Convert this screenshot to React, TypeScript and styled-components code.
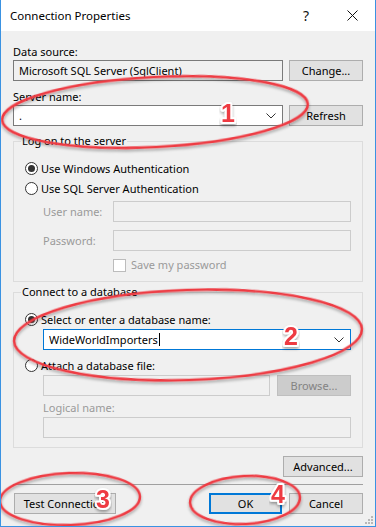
import React from "react";
import styled, { createGlobalStyle, css } from "styled-components";

const GlobalStyle = createGlobalStyle`
  html, body {
    margin: 0;
    padding: 0;
    background: #ffffff;
  }
  body {
    font-family: "Noto Sans", "Open Sans", sans-serif;
    font-size: 11px;
    color: #000;
  }
`;

const Window = styled.div`
  position: relative;
  width: 376px;
  height: 527px;
  box-sizing: border-box;
  border: 1px solid #3a92e2;
  border-top: none;
  background: #f0f0f0;
  display: flex;
  flex-direction: column;
  overflow: hidden;
`;

const TitleBar = styled.div`
  height: 31px;
  flex: none;
  background: #ffffff;
  display: flex;
  align-items: center;
  padding-left: 9px;
  font-size: 11.5px;
`;

const TitleText = styled.div`
  flex: 1;
`;

const TitleIcon = styled.div`
  width: 46px;
  height: 31px;
  display: flex;
  align-items: center;
  justify-content: center;
  font-size: 14px;
  color: #111;
`;

const Body = styled.div`
  flex: 1;
  display: flex;
  flex-direction: column;
  padding: 13px 12px 0 12px;
`;

const Label = styled.div<{ $disabled?: boolean; $indent?: number }>`
  height: 16px;
  line-height: 16px;
  white-space: nowrap;
  color: ${(p) => (p.$disabled ? "#9a9a9a" : "#000")};
  margin-left: ${(p) => p.$indent ?? 0}px;
`;

type BoxKind = "readonly" | "normal" | "disabled" | "focus";

const Box = styled.div<{ $kind: BoxKind; $w?: number }>`
  box-sizing: border-box;
  height: 21px;
  ${(p) => (p.$w ? css`width: ${p.$w}px; flex: none;` : css`flex: 1;`)}
  display: flex;
  align-items: center;
  padding: 0 4px 0 5px;
  border: 1px solid #7a7a7a;
  background: #ffffff;
  white-space: nowrap;
  ${(p) =>
    p.$kind === "readonly" &&
    css`
      background: #f0f0f0;
    `}
  ${(p) =>
    p.$kind === "disabled" &&
    css`
      background: #f0f0f0;
      border-color: #cccccc;
    `}
  ${(p) =>
    p.$kind === "focus" &&
    css`
      border-color: #0078d7;
    `}
`;

const BoxText = styled.span`
  flex: 1;
  overflow: hidden;
`;

const Caret = styled.span`
  display: inline-block;
  width: 1px;
  height: 13px;
  background: #000;
  vertical-align: -2px;
  margin-left: 1px;
`;

const Chevron = () => (
  <svg width="10" height="6" viewBox="0 0 10 6" style={{ flex: "none", marginRight: 2 }}>
    <path d="M0.5 0.5 L5 5 L9.5 0.5" fill="none" stroke="#333" strokeWidth="1" />
  </svg>
);

const Button = styled.button<{ $w: number; $default?: boolean }>`
  box-sizing: border-box;
  width: ${(p) => p.$w}px;
  height: 21px;
  flex: none;
  padding: 0;
  font: inherit;
  color: #000;
  background: #e1e1e1;
  border: 1px solid #adadad;
  white-space: nowrap;
  ${(p) =>
    p.$default &&
    css`
      border: 2px solid #0078d7;
    `}
  &:disabled {
    background: #cccccc;
    border-color: #bfbfbf;
    color: #838383;
  }
`;

const Row = styled.div<{ $gap?: number; $top?: number; $indent?: number }>`
  display: flex;
  align-items: center;
  gap: ${(p) => p.$gap ?? 6}px;
  margin-top: ${(p) => p.$top ?? 0}px;
  margin-left: ${(p) => p.$indent ?? 0}px;
`;

const Group = styled.fieldset<{ $top: number; $bottom: number }>`
  margin: ${(p) => p.$top}px 0 0 0;
  padding: 11px 11px ${(p) => p.$bottom}px 11px;
  border: 1px solid #dcdcdc;
  min-width: 0;
  display: flex;
  flex-direction: column;
`;

const Legend = styled.legend`
  padding: 0 1px;
  margin-left: -4px;
  height: 16px;
  line-height: 16px;
`;

const RadioRow = styled.label<{ $top?: number }>`
  display: flex;
  align-items: center;
  gap: 3px;
  height: 16px;
  margin-top: ${(p) => p.$top ?? 0}px;
  white-space: nowrap;
`;

const RadioCircle = styled.span<{ $checked?: boolean }>`
  box-sizing: border-box;
  width: 13px;
  height: 13px;
  border-radius: 50%;
  border: 1px solid #333;
  background: #fff;
  display: flex;
  align-items: center;
  justify-content: center;
  &::after {
    content: "";
    width: 7px;
    height: 7px;
    border-radius: 50%;
    background: ${(p) => (p.$checked ? "#333" : "transparent")};
  }
`;

const CheckBox = styled.span`
  box-sizing: border-box;
  width: 13px;
  height: 13px;
  border: 1px solid #bcbcbc;
  background: #fff;
  flex: none;
`;

const FieldLabel = styled(Label)`
  width: 70px;
  flex: none;
`;

const Separator = styled.div`
  height: 1px;
  background: #a0a0a0;
  margin-top: 7px;
`;

const Footer = styled.div`
  display: flex;
  align-items: center;
  margin-top: 8px;
  padding-left: 1px;
`;

const Spacer = styled.div`
  flex: 1;
`;

const Grip = styled.svg`
  position: absolute;
  right: 2px;
  bottom: 2px;
`;

const Overlay = styled.svg`
  position: absolute;
  left: -1px;
  top: 0;
  pointer-events: none;
`;

const marks = [
  { cx: 155, cy: 112, rx: 153, ry: 35, rot: -3, n: "1", x: 221, y: 122 },
  { cx: 188, cy: 335, rx: 174, ry: 45, rot: -2, n: "2", x: 284, y: 345 },
  { cx: 70, cy: 499, rx: 70, ry: 26, rot: -2, n: "3", x: 96, y: 508 },
  { cx: 245, cy: 500, rx: 55, ry: 24, rot: -3, n: "4", x: 271, y: 503 },
];

export default function App() {
  return (
    <>
      <GlobalStyle />
      <Window>
        <TitleBar>
          <TitleText>Connection Properties</TitleText>
          <TitleIcon>?</TitleIcon>
          <TitleIcon>
            <svg width="11" height="11" viewBox="0 0 11 11">
              <path d="M0.5 0.5 L10.5 10.5 M10.5 0.5 L0.5 10.5" stroke="#111" strokeWidth="1" />
            </svg>
          </TitleIcon>
        </TitleBar>
        <Body>
          <Label>Data source:</Label>
          <Row>
            <Box $kind="readonly">
              <BoxText>Microsoft SQL Server (SqlClient)</BoxText>
            </Box>
            <Button $w={74}>Change...</Button>
          </Row>
          <Label style={{ marginTop: 8 }}>Server name:</Label>
          <Row>
            <Box $kind="normal">
              <BoxText>.</BoxText>
              <Chevron />
            </Box>
            <Button $w={74}>Refresh</Button>
          </Row>

          <Group $top={7} $bottom={8}>
            <Legend>Log on to the server</Legend>
            <RadioRow>
              <RadioCircle $checked />
              Use Windows Authentication
            </RadioRow>
            <RadioRow $top={4}>
              <RadioCircle />
              Use SQL Server Authentication
            </RadioRow>
            <Row $top={5} $indent={18} $gap={0}>
              <FieldLabel $disabled>User name:</FieldLabel>
              <Box $kind="disabled" />
            </Row>
            <Row $top={8} $indent={18} $gap={0}>
              <FieldLabel $disabled>Password:</FieldLabel>
              <Box $kind="disabled" />
            </Row>
            <Row $top={6} $indent={88} $gap={5} style={{ height: 16 }}>
              <CheckBox />
              <Label $disabled>Save my password</Label>
            </Row>
          </Group>

          <Group $top={2} $bottom={9}>
            <Legend>Connect to a database</Legend>
            <RadioRow>
              <RadioCircle $checked />
              Select or enter a database name:
            </RadioRow>
            <Row $top={2} $indent={18}>
              <Box $kind="focus">
                <BoxText>
                  WideWorldImporters
                  <Caret />
                </BoxText>
                <Chevron />
              </Box>
            </Row>
            <RadioRow $top={7}>
              <RadioCircle />
              Attach a database file:
            </RadioRow>
            <Row $top={2} $indent={18} $gap={7}>
              <Box $kind="disabled" />
              <Button $w={74} disabled>
                Browse...
              </Button>
            </Row>
            <Label $disabled $indent={18} style={{ marginTop: 4 }}>
              Logical name:
            </Label>
            <Row $top={1} $indent={18}>
              <Box $kind="disabled" />
            </Row>
          </Group>

          <Row $top={8}>
            <Spacer />
            <Button $w={80}>Advanced...</Button>
          </Row>
          <Separator />
          <Footer>
            <Button $w={102}>Test Connection</Button>
            <Spacer />
            <Button $w={73} $default>
              OK
            </Button>
            <Button $w={74} style={{ marginLeft: 7 }}>
              Cancel
            </Button>
          </Footer>
        </Body>

        <Grip width="8" height="8" viewBox="0 0 8 8">
          {[
            [6, 0],
            [3, 3],
            [6, 3],
            [0, 6],
            [3, 6],
            [6, 6],
          ].map(([x, y], i) => (
            <rect key={i} x={x} y={y} width="2" height="2" fill="#b8b8b8" />
          ))}
        </Grip>

        <Overlay width="376" height="527" viewBox="0 0 376 527">
          <defs>
            <filter id="shade" x="-10%" y="-10%" width="120%" height="130%">
              <feDropShadow dx="0" dy="2" stdDeviation="1.6" floodColor="#000" floodOpacity="0.35" />
            </filter>
          </defs>
          {marks.map((m) => (
            <ellipse
              key={m.n + "e"}
              cx={m.cx}
              cy={m.cy}
              rx={m.rx}
              ry={m.ry}
              transform={`rotate(${m.rot} ${m.cx} ${m.cy})`}
              fill="none"
              stroke="#ee3a43"
              strokeWidth="2.5"
              filter="url(#shade)"
            />
          ))}
          {marks.map((m) => (
            <text
              key={m.n}
              x={m.x}
              y={m.y}
              fontFamily="'Liberation Sans', Arial, sans-serif"
              fontWeight="bold"
              fontSize="25"
              fill="#ee3a43"
              stroke="#ffffff"
              strokeWidth="4"
              paintOrder="stroke"
              strokeLinejoin="round"
              filter="url(#shade)"
            >
              {m.n}
            </text>
          ))}
        </Overlay>
      </Window>
    </>
  );
}
